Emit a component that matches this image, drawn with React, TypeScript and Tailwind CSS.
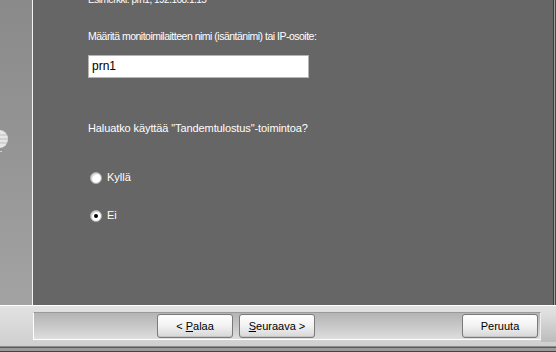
import React from 'react';

const font = { fontFamily: '"Liberation Sans", Arial, sans-serif' };

function Radio({ checked, label }: { checked?: boolean; label: string }) {
  return (
    <label className="flex items-center gap-[5px] text-[11px] text-white">
      <span className="w-[12px] h-[12px] rounded-full bg-white border border-[#a8a8a8] flex items-center justify-center shadow-[inset_1px_1px_1px_#cfcfcf]">
        {checked && <span className="w-[4px] h-[4px] rounded-full bg-black" />}
      </span>
      <span>{label}</span>
    </label>
  );
}

function WizButton({ children, className = '' }: { children: React.ReactNode; className?: string }) {
  return (
    <button
      className={`h-[24px] w-[76px] rounded-[3px] border border-[#7a7a7a] bg-gradient-to-b from-[#ffffff] via-[#f2f2f2] to-[#d6d6d6] text-[11px] text-black shadow-[inset_0_-1px_0_#c4c4c4] ${className}`}
    >
      {children}
    </button>
  );
}

export default function App() {
  return (
    <div className="w-[556px] h-[352px] flex flex-col overflow-hidden bg-[#666666]" style={font}>
      <div className="flex flex-1 min-h-0">
        {/* left banner strip */}
        <div className="w-[32px] bg-gradient-to-b from-[#8a8a8a] via-[#959595] to-[#a3a3a3] flex flex-col">
          <svg width="10" height="28" viewBox="0 0 10 28" className="mt-[127px]">
            <ellipse cx="0" cy="12" rx="8" ry="9" fill="#e6e6e6" />
            <path d="M0 8 H7 M0 12 H8 M0 16 H7" stroke="#bdbdbd" strokeWidth="1" />
            <rect x="0" y="24" width="2" height="1" fill="#d0d0d0" />
          </svg>
        </div>
        <div className="w-px bg-[#f4f4f4]" />
        {/* content */}
        <div className="flex-1 bg-[#666666] pl-[55px] text-[11px] text-white leading-[13px]">
          <div className="-mt-[7px] text-[10px] tracking-[-0.5px]">Esimerkki: prn1, 192.168.1.15</div>
          <div className="mt-[24px] text-[10.5px] tracking-[-0.5px]">
            Määritä monitoimilaitteen nimi (isäntänimi) tai IP-osoite:
          </div>
          <div className="mt-[12px] w-[221px] h-[23px] bg-white border border-[#b5b5b5] flex items-center px-[3px] text-black text-[12px]">
            prn1
          </div>
          <div className="mt-[44px] tracking-[-0.1px]">Haluatko käyttää "Tandemtulostus"-toimintoa?</div>
          <div className="mt-[36px] ml-[2px]">
            <Radio label="Kyllä" />
          </div>
          <div className="mt-[25px] ml-[2px]">
            <Radio checked label="Ei" />
          </div>
        </div>
        {/* right frame edge */}
        <div className="w-[3px] flex">
          <div className="w-px bg-[#3c3c3c]" />
          <div className="w-px bg-[#a0a0a0]" />
          <div className="w-px bg-[#4a4a4a]" />
        </div>
      </div>
      {/* bottom button bar */}
      <div className="h-[47px] flex flex-col bg-[#d9d9d9]">
        <div className="h-px bg-white" />
        <div className="flex-1 flex bg-gradient-to-b from-[#e2e2e2] to-[#cfcfcf] pt-[6px] pb-[4px]">
          <div className="w-[33px]" />
          <div className="w-[508px] h-[28px] border-t border-t-[#9a9a9a] border-b border-b-white border-l border-l-white border-r border-r-[#f0f0f0] bg-gradient-to-b from-[#b4b4b4] via-[#c8c8c8] to-[#dedede] flex items-center pl-[123px] pr-[2px]">
            <WizButton>
              &lt; <span className="underline">P</span>alaa
            </WizButton>
            <WizButton className="ml-[6px]">
              <span className="underline">S</span>euraava &gt;
            </WizButton>
            <WizButton className="ml-auto">Peruuta</WizButton>
          </div>
          <div className="flex-1 bg-gradient-to-b from-[#e0e0e0] to-[#bcbcbc]" />
        </div>
        <div className="h-px bg-[#8c8c8c]" />
        <div className="h-px bg-[#5a5a5a]" />
        <div className="h-[3px] bg-[#9a9a9a]" />
        <div className="h-px bg-[#444444]" />
      </div>
    </div>
  );
}
